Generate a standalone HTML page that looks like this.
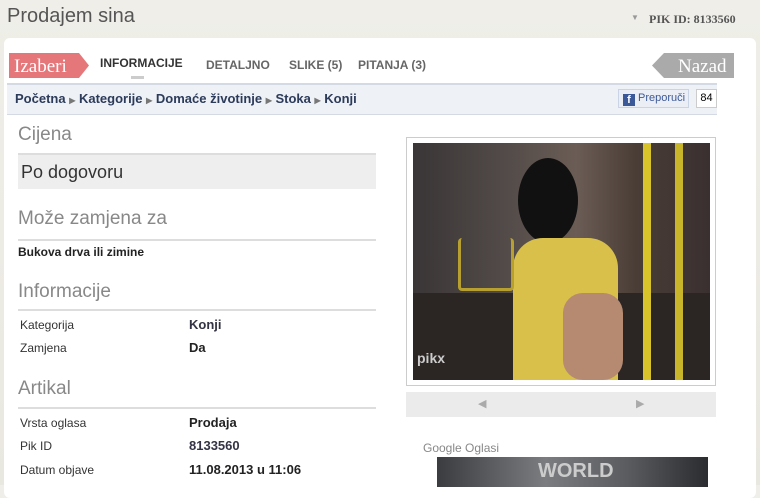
<!DOCTYPE html><html><head><meta charset="utf-8"><style>
body{margin:0;width:760px;height:485px;overflow:hidden;background:linear-gradient(#efeee8,#e9e8e0);font-family:"Liberation Sans",sans-serif;position:relative}
.a{position:absolute}
.h{color:#888;font-size:19px}
.ln{height:2px;background:#ddd;left:18px;width:358px}
.k{font-size:12px;color:#333}
.v{font-size:13px;font-weight:bold;color:#334;left:189px}
.nav{font-size:12px;font-weight:bold;color:#666;top:58px}
</style></head><body>
<div class="a" style="left:7px;top:5px;font-size:20px;color:#555">Prodajem sina</div>
<div class="a" style="left:631px;top:13px;font-size:8px;color:#999">▼</div>
<div class="a" style="left:649px;top:12px;font-size:12px;font-weight:bold;color:#555;font-family:'Liberation Serif',serif">PIK ID: 8133560</div>
<div class="a" style="left:4px;top:38px;width:752px;height:460px;background:#fff;border-radius:6px"></div>
<svg class="a" style="left:9px;top:53px" width="80" height="25"><polygon points="0,0 70,0 80,12.5 70,25 0,25" fill="#e5777b"/><text x="5" y="19" font-family="Liberation Serif" font-size="19" fill="#fff">Izaberi</text></svg>
<div class="a nav" style="left:100px;top:56px;color:#333">INFORMACIJE</div>
<div class="a" style="left:131px;top:76px;width:13px;height:3px;background:#ccc"></div>
<div class="a nav" style="left:206px">DETALJNO</div>
<div class="a nav" style="left:289px">SLIKE (5)</div>
<div class="a nav" style="left:358px">PITANJA (3)</div>
<svg class="a" style="left:652px;top:53px" width="82" height="25"><polygon points="0,12.5 12,0 82,0 82,25 12,25" fill="#aaa"/><text x="26" y="19" font-family="Liberation Serif" font-size="19" fill="#fff">Nazad</text></svg>
<div class="a" style="left:7px;top:83px;width:710px;height:29px;background:#eef1f6;border-top:2px solid #d4dae4;border-bottom:1px solid #d4dae4"></div>
<div class="a" style="left:15px;top:91px;font-size:13px;font-weight:bold;color:#2c3b5a">Početna <span style="font-size:8px;color:#777">▶</span> Kategorije <span style="font-size:8px;color:#777">▶</span> Domaće životinje <span style="font-size:8px;color:#777">▶</span> Stoka <span style="font-size:8px;color:#777">▶</span> Konji</div>
<div class="a" style="left:618px;top:89px;width:69px;height:17px;background:#eceef5;border:1px solid #cad4e7;font-size:11px;color:#3b5998;line-height:17px"><span style="display:inline-block;width:12px;height:12px;background:#3b5998;color:#fff;font-weight:bold;text-align:center;line-height:13px;margin:0 3px 0 4px;vertical-align:-2px">f</span>Preporuči</div>
<div class="a" style="left:696px;top:89px;width:19px;height:17px;border:1px solid #ccc;font-size:11px;text-align:center;line-height:17px;background:#fff">84</div>
<div class="a h" style="left:18px;top:124px">Cijena</div>
<div class="a" style="left:18px;top:153px;width:358px;height:36px;background:#eee;border-top:2px solid #ddd;box-sizing:border-box"></div>
<div class="a" style="left:21px;top:162px;font-size:18px;color:#333">Po dogovoru</div>
<div class="a h" style="left:18px;top:208px">Može zamjena za</div>
<div class="a ln" style="top:239px"></div>
<div class="a" style="left:18px;top:245px;font-size:12px;font-weight:bold;color:#222">Bukova drva ili zimine</div>
<div class="a h" style="left:18px;top:281px">Informacije</div>
<div class="a ln" style="top:309px"></div>
<div class="a k" style="left:20px;top:318px">Kategorija</div><div class="a v" style="top:317px">Konji</div>
<div class="a k" style="left:20px;top:341px">Zamjena</div><div class="a v" style="top:340px;color:#222">Da</div>
<div class="a h" style="left:18px;top:378px">Artikal</div>
<div class="a ln" style="top:407px"></div>
<div class="a k" style="left:20px;top:416px">Vrsta oglasa</div><div class="a v" style="top:415px;color:#222">Prodaja</div>
<div class="a k" style="left:20px;top:439px">Pik ID</div><div class="a v" style="top:438px">8133560</div>
<div class="a k" style="left:20px;top:463px">Datum objave</div><div class="a v" style="top:462px;color:#222">11.08.2013 u 11:06</div>
<div class="a" style="left:406px;top:137px;width:308px;height:247px;border:1px solid #ccc;background:#fff"></div>
<div class="a" style="left:413px;top:143px;width:297px;height:237px;background:linear-gradient(90deg,#3a3536 0%,#514a48 30%,#6b5d55 55%,#4a3d36 75%,#3a3030 100%);overflow:hidden">
 <div class="a" style="left:0;top:150px;width:297px;height:90px;background:#2b2624"></div>
 <div class="a" style="left:230px;top:0;width:8px;height:237px;background:#d8c32a"></div>
 <div class="a" style="left:262px;top:0;width:8px;height:237px;background:#c9b52a"></div>
 <div class="a" style="left:105px;top:15px;width:60px;height:85px;background:#111;border-radius:50%"></div>
 <div class="a" style="left:100px;top:95px;width:105px;height:142px;background:#d8c04a;border-radius:30px 30px 0 0"></div>
 <div class="a" style="left:150px;top:150px;width:60px;height:87px;background:#b58a70;border-radius:20px"></div>
 <div class="a" style="left:45px;top:95px;width:50px;height:50px;border:3px solid #b8a030;border-radius:4px;border-top:none"></div>
 <div class="a" style="left:4px;top:207px;font-size:14px;font-weight:bold;color:#ccc">pikx</div>
</div>
<div class="a" style="left:406px;top:392px;width:310px;height:25px;background:#ebebeb"></div>
<div class="a" style="left:478px;top:397px;font-size:11px;color:#aaa">◀</div>
<div class="a" style="left:636px;top:397px;font-size:11px;color:#aaa">▶</div>
<div class="a" style="left:423px;top:441px;font-size:12px;color:#888">Google Oglasi</div>
<div class="a" style="left:437px;top:457px;width:271px;height:30px;background:linear-gradient(90deg,#3a3c40,#7a7c80 40%,#5a5c60 70%,#2a2c30)"></div>
<div class="a" style="left:538px;top:460px;font-size:20px;font-weight:bold;color:#ccc;font-family:'Liberation Sans Narrow','Liberation Sans',sans-serif">WORLD</div>
</body></html>
